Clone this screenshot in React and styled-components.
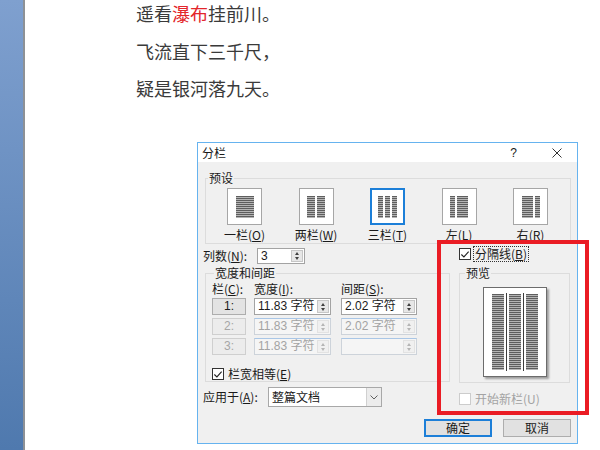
import React from 'react';
import styled, { createGlobalStyle } from 'styled-components';

const GlobalStyle = createGlobalStyle`
  html, body {
    margin: 0;
    padding: 0;
    background: #fff;
  }
  body {
    font-family: "Noto Sans CJK SC", "Liberation Sans", sans-serif;
  }
`;

const presets = [
  { label: '一栏', key: 'O', cols: [18] },
  { label: '两栏', key: 'W', cols: [8, 8] },
  { label: '三栏', key: 'T', cols: [5, 5, 5], selected: true },
  { label: '左', key: 'L', cols: [5, 11] },
  { label: '右', key: 'R', cols: [11, 5] },
];

const rows = [
  { n: 1, width: '11.83 字符', space: '2.02 字符' },
  { n: 2, width: '11.83 字符', space: '2.02 字符', disabled: true },
  { n: 3, width: '11.83 字符', space: '', disabled: true },
];

const stripes = `repeating-linear-gradient(to bottom, #5e5e5e 0 1px, #b4b4b4 1px 2px)`;

function Check({ checked, disabled, children, focus }) {
  return (
    <CheckRow $disabled={disabled}>
      <CheckBox $disabled={disabled}>
        {checked && (
          <svg width="11" height="11" viewBox="0 0 11 11">
            <polyline points="1.5,5.5 4.3,8.2 9.5,2.3" fill="none" stroke="#222" strokeWidth="1.2" />
          </svg>
        )}
      </CheckBox>
      <CheckLabel $focus={focus}>{children}</CheckLabel>
    </CheckRow>
  );
}

function Spin({ value, width, height, disabled }) {
  return (
    <SpinField $w={width} $h={height} $disabled={disabled}>
      <FieldText $disabled={disabled}>{value}</FieldText>
      <Spinner $disabled={disabled}>
        <Arrow $up $disabled={disabled} />
        <Arrow $disabled={disabled} />
      </Spinner>
    </SpinField>
  );
}

export default function App() {
  return (
    <Page>
      <GlobalStyle />
      <Gutter />
      <Doc>
        <Poem>
          <div>遥看<Red>瀑布</Red>挂前川。</div>
          <div>飞流直下三千尺，</div>
          <div>疑是银河落九天。</div>
        </Poem>

        <Dialog>
          <TitleBar>
            <Title>分栏</Title>
            <Help>?</Help>
            <Close>
              <svg width="10" height="10" viewBox="0 0 10 10">
                <path d="M0.5 0.5 L9.5 9.5 M9.5 0.5 L0.5 9.5" stroke="#333" strokeWidth="1" />
              </svg>
            </Close>
          </TitleBar>

          <Body>
            <PresetGroup>
              <GroupTitle>预设</GroupTitle>
              <PresetRow>
                {presets.map((p) => (
                  <PresetItem key={p.key}>
                    <PresetBox $selected={p.selected}>
                      <PresetIcon $gap={p.cols.length === 3 ? 2 : 2}>
                        {p.cols.map((w, i) => (
                          <Stripe key={i} style={{ width: w }} />
                        ))}
                      </PresetIcon>
                    </PresetBox>
                    <PresetLabel>
                      {p.label}(<Acc>{p.key}</Acc>)
                    </PresetLabel>
                  </PresetItem>
                ))}
              </PresetRow>
            </PresetGroup>

            <Lower>
              <LeftCol>
                <CountRow>
                  <RowLabel $w={54}>列数(<Acc>N</Acc>):</RowLabel>
                  <Spin value="3" width={48} height={16} />
                </CountRow>

                <SpacingGroup>
                  <GroupTitle>宽度和间距</GroupTitle>
                  <ColGrid>
                    <HeadCell>栏(<Acc>C</Acc>):</HeadCell>
                    <HeadCell>宽度(<Acc>I</Acc>):</HeadCell>
                    <HeadCell>间距(<Acc>S</Acc>):</HeadCell>
                    {rows.map((r) => (
                      <React.Fragment key={r.n}>
                        <NumButton $disabled={r.disabled}>{r.n}:</NumButton>
                        <Spin value={r.width} width={77} height={17} disabled={r.disabled} />
                        <Spin value={r.space} width={76} height={17} disabled={r.disabled} />
                      </React.Fragment>
                    ))}
                  </ColGrid>
                  <EqualRow>
                    <Check checked>栏宽相等(<Acc>E</Acc>)</Check>
                  </EqualRow>
                </SpacingGroup>

                <ApplyRow>
                  <RowLabel $w={65}>应用于(<Acc>A</Acc>):</RowLabel>
                  <Combo>
                    <ComboText>整篇文档</ComboText>
                    <ComboButton>
                      <svg width="8" height="5" viewBox="0 0 8 5">
                        <polyline points="0.5,0.5 4,4 7.5,0.5" fill="none" stroke="#606060" strokeWidth="1" />
                      </svg>
                    </ComboButton>
                  </Combo>
                </ApplyRow>
              </LeftCol>

              <RightCol>
                <LineRow>
                  <Check checked focus>分隔线(<Acc>B</Acc>)</Check>
                </LineRow>
                <PreviewGroup>
                  <GroupTitle $indent={5}>预览</GroupTitle>
                  <PreviewArea>
                    <PreviewPage>
                      <PreviewCol />
                      <PreviewRule />
                      <PreviewCol />
                      <PreviewRule />
                      <PreviewCol />
                    </PreviewPage>
                  </PreviewArea>
                </PreviewGroup>
                <NewColRow>
                  <Check disabled>开始新栏(U)</Check>
                </NewColRow>
              </RightCol>
            </Lower>

            <ButtonRow>
              <Button $default>确定</Button>
              <Button>取消</Button>
            </ButtonRow>
          </Body>
        </Dialog>
      </Doc>
      <Highlight />
    </Page>
  );
}

const Page = styled.div`
  position: relative;
  display: flex;
  width: 600px;
  height: 450px;
  overflow: hidden;
  background: #fff;
`;

const Gutter = styled.div`
  flex: none;
  width: 23px;
  background: linear-gradient(to bottom, #7f a0 cf, #4f79ae);
  background: linear-gradient(to bottom, #7fa0cf, #4f79ae);
  border-right: 2px solid #8d9196;
`;

const Doc = styled.div`
  flex: 1;
  display: flex;
  flex-direction: column;
`;

const Poem = styled.div`
  margin: -5px 0 0 111px;
  font-size: 18px;
  line-height: 37.5px;
  color: #3a3a3a;
`;

const Red = styled.span`
  color: #e3262b;
`;

const Dialog = styled.div`
  margin: 34.5px 0 0 172px;
  width: 381px;
  height: 302px;
  box-sizing: border-box;
  border: 1px solid #66b3ef;
  background: #f0f0f0;
  display: flex;
  flex-direction: column;
  font-size: 12px;
  color: #1a1a1a;
`;

const TitleBar = styled.div`
  height: 19px;
  flex: none;
  background: #fff;
  display: flex;
  align-items: center;
  padding-left: 4px;
`;

const Title = styled.div`
  flex: 1;
  line-height: 14px;
`;

const Help = styled.div`
  font-family: "Liberation Sans", sans-serif;
  font-size: 12px;
  margin-right: 35px;
`;

const Close = styled.div`
  display: flex;
  margin-right: 15px;
`;

const Body = styled.div`
  flex: 1;
  display: flex;
  flex-direction: column;
`;

const Group = styled.div`
  border: 1px solid #dcdcdc;
  box-sizing: border-box;
`;

const GroupTitle = styled.div`
  width: fit-content;
  margin: -8px 0 0 ${(p) => p.$indent ?? 2}px;
  padding: 0 1px;
  background: #f0f0f0;
  line-height: 14px;
`;

const PresetGroup = styled(Group)`
  margin: 16px 6px 0 7px;
  padding-bottom: 1px;
`;

const PresetRow = styled.div`
  display: flex;
  gap: 36.5px;
  padding: 3px 0 0 21px;
`;

const PresetItem = styled.div`
  width: 35px;
  display: flex;
  flex-direction: column;
  align-items: center;
`;

const PresetBox = styled.div`
  width: 35px;
  height: 37px;
  box-sizing: border-box;
  background: #fff;
  border: ${(p) => (p.$selected ? '2px solid #1c7fd8' : '1px solid #a6a6a6')};
  display: flex;
  align-items: center;
  justify-content: center;
`;

const PresetIcon = styled.div`
  display: flex;
  gap: ${(p) => p.$gap}px;
  height: 22px;
`;

const Stripe = styled.div`
  height: 100%;
  background: ${stripes};
`;

const PresetLabel = styled.div`
  margin-top: 3px;
  line-height: 14px;
  white-space: nowrap;
`;

const Acc = styled.span`
  text-decoration: underline;
  text-underline-offset: 1px;
`;

const Lower = styled.div`
  display: flex;
`;

const LeftCol = styled.div`
  width: 261px;
  flex: none;
  display: flex;
  flex-direction: column;
`;

const RightCol = styled.div`
  width: 111px;
  display: flex;
  flex-direction: column;
`;

const CountRow = styled.div`
  margin-top: 4px;
  padding-left: 5px;
  display: flex;
  align-items: center;
  height: 16px;
`;

const RowLabel = styled.div`
  width: ${(p) => p.$w}px;
  flex: none;
  white-space: nowrap;
  line-height: 14px;
`;

const SpinField = styled.div`
  display: flex;
  width: ${(p) => p.$w}px;
  height: ${(p) => p.$h}px;
  box-sizing: border-box;
  border: 1px solid ${(p) => (p.$disabled ? '#cdd3da' : '#a3a3a3')};
  border-top-color: ${(p) => (p.$disabled ? '#a9c6e6' : '#a3a3a3')};
  background: ${(p) => (p.$disabled ? '#f5f5f5' : '#fff')};
`;

const FieldText = styled.div`
  flex: 1;
  padding-left: 3px;
  font-family: "Liberation Sans", "Noto Sans CJK SC", sans-serif;
  font-size: 12px;
  line-height: 15px;
  white-space: nowrap;
  overflow: hidden;
  color: ${(p) => (p.$disabled ? '#a3a3a3' : '#1a1a1a')};
`;

const Spinner = styled.div`
  width: 12px;
  flex: none;
  margin: 1px;
  box-sizing: border-box;
  border: 1px solid ${(p) => (p.$disabled ? '#e2e2e2' : '#c6c6c6')};
  background: ${(p) => (p.$disabled ? '#f0f0f0' : '#e7e7e7')};
  display: flex;
  flex-direction: column;
  align-items: center;
  justify-content: center;
  gap: 2px;
`;

const Arrow = styled.div`
  width: 0;
  height: 0;
  border-left: 2.5px solid transparent;
  border-right: 2.5px solid transparent;
  ${(p) =>
    p.$up
      ? `border-bottom: 3px solid ${p.$disabled ? '#b5b5b5' : '#404040'};`
      : `border-top: 3px solid ${p.$disabled ? '#b5b5b5' : '#404040'};`}
`;

const SpacingGroup = styled(Group)`
  margin: 9px 0 0 7px;
  width: 245px;
  padding: 0 0 1px 6px;
`;

const ColGrid = styled.div`
  margin-top: 3px;
  display: grid;
  grid-template-columns: 42px 87px 76px;
  grid-template-rows: 12px 17px 17px 17px;
  row-gap: 3px;
`;

const HeadCell = styled.div`
  line-height: 12px;
  white-space: nowrap;
`;

const NumButton = styled.div`
  width: 34px;
  box-sizing: border-box;
  border: 1px solid ${(p) => (p.$disabled ? '#cfcfcf' : '#adadad')};
  background: ${(p) => (p.$disabled ? '#ececec' : '#e3e3e3')};
  color: ${(p) => (p.$disabled ? '#a6a6a6' : '#1a1a1a')};
  font-family: "Liberation Sans", sans-serif;
  font-size: 12px;
  line-height: 15px;
  text-align: center;
`;

const EqualRow = styled.div`
  margin-top: 13px;
`;

const CheckRow = styled.div`
  display: flex;
  align-items: center;
  height: 12px;
  color: ${(p) => (p.$disabled ? '#a3a3a3' : '#1a1a1a')};
`;

const CheckBox = styled.div`
  width: 12px;
  height: 12px;
  box-sizing: border-box;
  border: 1px solid ${(p) => (p.$disabled ? '#cccccc' : '#333')};
  background: #fff;
  display: flex;
  align-items: center;
  justify-content: center;
`;

const CheckLabel = styled.div`
  margin-left: 3px;
  line-height: 14px;
  padding: 0 1px;
  white-space: nowrap;
  outline: ${(p) => (p.$focus ? '1px dotted #333' : 'none')};
`;

const ApplyRow = styled.div`
  margin-top: 5px;
  padding-left: 5px;
  display: flex;
  align-items: center;
`;

const Combo = styled.div`
  width: 114px;
  height: 20px;
  box-sizing: border-box;
  border: 1px solid #a8a8a8;
  background: #fff;
  display: flex;
`;

const ComboText = styled.div`
  flex: 1;
  padding-left: 3px;
  line-height: 18px;
`;

const ComboButton = styled.div`
  width: 15px;
  box-sizing: border-box;
  border-left: 1px solid #d0d0d0;
  background: #ececec;
  display: flex;
  align-items: center;
  justify-content: center;
`;

const LineRow = styled.div`
  margin-top: 4px;
`;

const PreviewGroup = styled(Group)`
  margin-top: 13px;
  padding-bottom: 5px;
`;

const PreviewArea = styled.div`
  display: flex;
  justify-content: center;
  margin-top: 7px;
`;

const PreviewPage = styled.div`
  width: 64px;
  height: 90px;
  box-sizing: border-box;
  border: 1px solid #6c6c6c;
  background: #fff;
  box-shadow: 2px 2px 2px rgba(0, 0, 0, 0.35);
  display: flex;
  align-items: center;
  justify-content: center;
`;

const PreviewCol = styled.div`
  width: 12px;
  height: 76px;
  background: ${stripes};
`;

const PreviewRule = styled.div`
  width: 1px;
  height: 78px;
  margin: 0 2px;
  background: #3c3c3c;
`;

const NewColRow = styled.div`
  margin-top: 10px;
`;

const ButtonRow = styled.div`
  margin-top: auto;
  display: flex;
  justify-content: flex-end;
  gap: 11px;
  padding: 0 6px 6px 0;
`;

const Button = styled.div`
  width: 68px;
  height: 18px;
  box-sizing: border-box;
  background: #e1e1e1;
  border: 1px solid ${(p) => (p.$default ? '#1c7fd8' : '#adadad')};
  box-shadow: ${(p) => (p.$default ? 'inset 0 0 0 1px #1c7fd8' : 'none')};
  text-align: center;
  line-height: 16px;
`;

const Highlight = styled.div`
  position: absolute;
  left: 437px;
  top: 240px;
  width: 152px;
  height: 175px;
  box-sizing: border-box;
  border: 4px solid #ea1c24;
  pointer-events: none;
`;
